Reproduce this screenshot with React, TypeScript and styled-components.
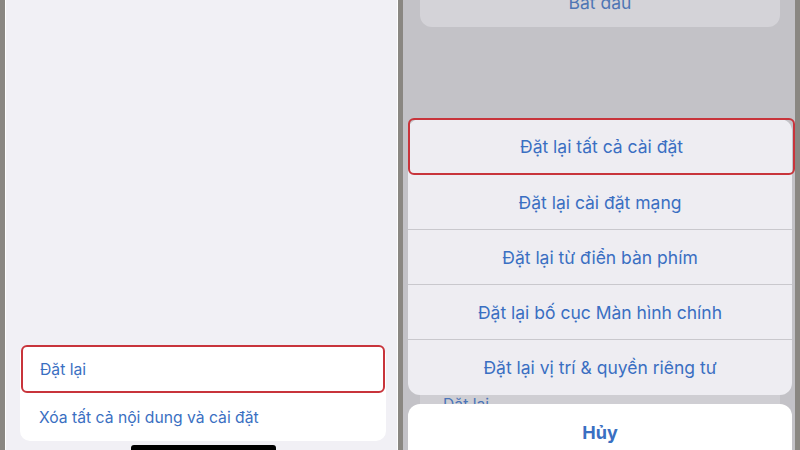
import React from 'react';
import styled, { createGlobalStyle } from 'styled-components';

const GlobalStyle = createGlobalStyle`
  html, body {
    margin: 0;
    padding: 0;
    background: #8a8782;
  }
  * {
    box-sizing: border-box;
  }
`;

const BLUE = '#3a6fc2';
const RED = '#c8343b';

const Frame = styled.div`
  display: flex;
  gap: 5px;
  width: 800px;
  height: 450px;
  padding: 0 5px;
  background: #8a8782;
  overflow: hidden;
  font-family: Inter, "Noto Sans", sans-serif;
`;

const LeftScreen = styled.div`
  width: 393px;
  height: 450px;
  display: flex;
  flex-direction: column;
  justify-content: flex-end;
  align-items: center;
  padding: 0 11px 0 14px;
  background: #f1f0f5;
  border-left: 1px solid #ffffff;
  border-right: 1px solid #ffffff;
  overflow: hidden;
`;

const ListCard = styled.div`
  align-self: stretch;
  display: flex;
  flex-direction: column;
  background: #ffffff;
  border-radius: 10px;
`;

const ListRow = styled.div<{ $highlight?: boolean }>`
  height: 48px;
  display: flex;
  align-items: center;
  padding-left: ${(p) => (p.$highlight ? '17px' : '19px')};
  margin: ${(p) => (p.$highlight ? '0 1px 0 1px' : '0')};
  border: ${(p) => (p.$highlight ? `2px solid ${RED}` : 'none')};
  border-radius: ${(p) => (p.$highlight ? '6px' : '0')};
  color: ${BLUE};
  font-size: 15.7px;
`;

const HomeBar = styled.div`
  width: 145px;
  height: 5px;
  margin-top: 4px;
  background: #000000;
  border-radius: 3px 3px 0 0;
`;

const RightScreen = styled.div`
  width: 392px;
  height: 450px;
  display: flex;
  flex-direction: column;
  background: #c3c2c7;
  overflow: hidden;
`;

const DimCard = styled.div`
  height: 27px;
  flex-shrink: 0;
  margin: 0 15px 0 17px;
  display: flex;
  justify-content: center;
  align-items: flex-end;
  background: #d4d3d8;
  border-radius: 0 0 12px 12px;
  overflow: hidden;
`;

const DimLabel = styled.span`
  margin-bottom: 14px;
  color: #4f76b4;
  font-size: 17.5px;
  line-height: 20px;
`;

const Spacer = styled.div`
  flex: 1;
`;

const Sheet = styled.div`
  flex-shrink: 0;
  margin: 0 3px 0 5px;
  display: flex;
  flex-direction: column;
  background: #eeedf2;
  border-radius: 12px;
`;

const SheetRow = styled.div<{ $highlight?: boolean; $last?: boolean }>`
  height: 55px;
  display: flex;
  justify-content: center;
  align-items: center;
  color: ${BLUE};
  font-size: 17.5px;
  border-bottom: ${(p) => (p.$last || p.$highlight ? 'none' : '1px solid #c9c8cd')};
  ${(p) =>
    p.$highlight &&
    `
    margin-top: -1px;
    margin-right: -3px;
    height: 57px;
    border: 2px solid ${RED};
    border-radius: 6px;
  `}
`;

const Peek = styled.div`
  height: 9px;
  flex-shrink: 0;
  margin: 0 15px 0 17px;
  padding-left: 23px;
  background: #cfced3;
  overflow: hidden;
`;

const PeekLabel = styled.div`
  margin-top: 1px;
  color: #4a74b8;
  font-size: 15.7px;
  line-height: 18px;
`;

const CancelButton = styled.div`
  height: 56px;
  flex-shrink: 0;
  margin: 0 3px -10px 5px;
  display: flex;
  justify-content: center;
  align-items: center;
  background: #ffffff;
  border-radius: 12px 12px 0 0;
  color: ${BLUE};
  font-size: 18px;
  font-weight: 700;
`;

const sheetItems = [
  'Đặt lại tất cả cài đặt',
  'Đặt lại cài đặt mạng',
  'Đặt lại từ điển bàn phím',
  'Đặt lại bố cục Màn hình chính',
  'Đặt lại vị trí & quyền riêng tư',
];

export default function App() {
  return (
    <>
      <GlobalStyle />
      <Frame>
        <LeftScreen>
          <ListCard>
            <ListRow $highlight>Đặt lại</ListRow>
            <ListRow>Xóa tất cả nội dung và cài đặt</ListRow>
          </ListCard>
          <HomeBar />
        </LeftScreen>

        <RightScreen>
          <DimCard>
            <DimLabel>Bắt đầu</DimLabel>
          </DimCard>
          <Spacer />
          <Sheet>
            {sheetItems.map((label, i) => (
              <SheetRow
                key={label}
                $highlight={i === 0}
                $last={i === sheetItems.length - 1}
              >
                {label}
              </SheetRow>
            ))}
          </Sheet>
          <Peek>
            <PeekLabel>Đặt lại</PeekLabel>
          </Peek>
          <CancelButton>Hủy</CancelButton>
        </RightScreen>
      </Frame>
    </>
  );
}
